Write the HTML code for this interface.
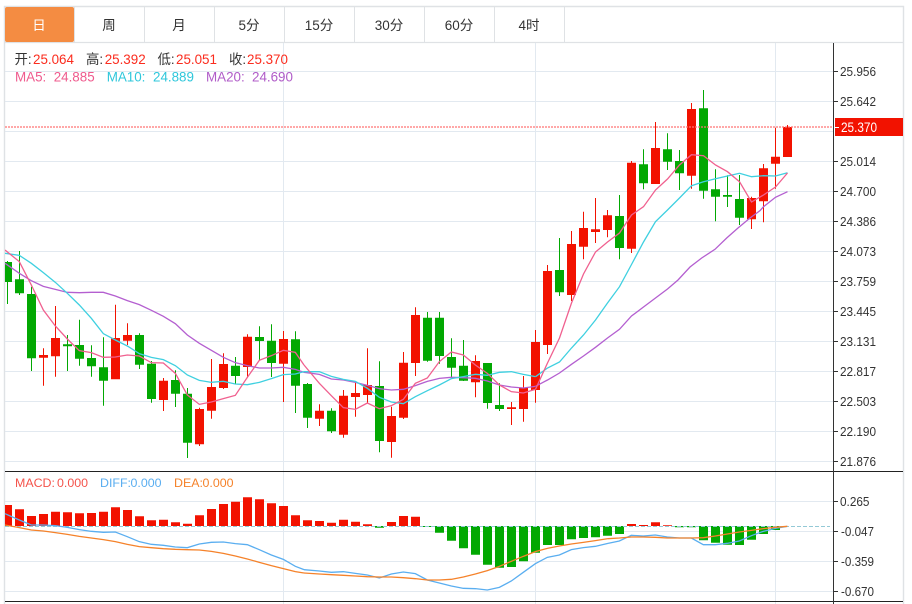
<!DOCTYPE html>
<html>
<head>
<meta charset="utf-8">
<style>
html,body{margin:0;padding:0;background:#fff;width:912px;height:604px;overflow:hidden}
svg{display:block;position:absolute;left:0;top:0}
text{font-family:"Liberation Sans","Noto Sans CJK SC",sans-serif}
.z polyline{fill:none;vector-effect:non-scaling-stroke}
.ax text{font-size:13px;fill:#333}
</style>
</head>
<body>
<svg width="912" height="604" viewBox="0 0 912 604">
<defs><clipPath id="c"><rect x="5" y="43" width="828" height="561"/></clipPath></defs>
<!-- frame -->
<path d="M4.5 604V6.5H903.5V604" fill="none" stroke="#dfe2e5" stroke-width="1.4"/>
<path d="M5 42.5H903" stroke="#dfe2e5" stroke-width="1.2"/>
<path d="M74.5 7V42M144.5 7V42M214.5 7V42M284.5 7V42M354.5 7V42M424.5 7V42M494.5 7V42M564.5 7V42" stroke="#dfe2e5"/>
<rect x="5" y="7" width="69" height="35" rx="2" fill="#f48c42"/>
<g font-size="13.5" text-anchor="middle" fill="#333">
<text x="39" y="30" fill="#fff">日</text>
<text x="109" y="30">周</text>
<text x="179" y="30">月</text>
<text x="249" y="30">5分</text>
<text x="319" y="30">15分</text>
<text x="389" y="30">30分</text>
<text x="459" y="30">60分</text>
<text x="529" y="30">4时</text>
</g>
<!-- grid -->
<path d="M5 71.5H833M5 101.5H833M5 131.5H833M5 161.5H833M5 191.5H833M5 221.5H833M5 251.5H833M5 281.5H833M5 311.5H833M5 341.5H833M5 371.5H833M5 401.5H833M5 431.5H833M5 461.5H833M5 501.5H833M5 531.5H833M5 561.5H833M5 591.5H833" stroke="#e2e9f0" fill="none"/>
<path d="M283.5 43V604M535.5 43V604M775.5 43V604" stroke="#e2e9f0" fill="none"/>
<g clip-path="url(#c)">
<!-- wicks -->
<path fill="none" stroke="#02a802" d="M7.5 261V304M19.5 251V295M31.5 286.7V371M67.5 335V371M79.5 319.7V365.7M91.5 345.3V376.7M103.5 337.3V405.7M139.5 333.3V369M151.5 361V402.7M175.5 370.3V407M187.5 388V458M235.5 357V384M259.5 326.3V360.7M271.5 324.3V377M295.5 331.3V413M307.5 383V428M331.5 408.3V433M379.5 361.3V452.3M427.5 312V361.7M439.5 312V363.7M451.5 338.3V378.3M463.5 340V381M487.5 363V408.7M499.5 383.3V411M559.5 238V296M619.5 195V259.3M643.5 149.3V189.3M667.5 133.3V170M679.5 150V190M703.5 90V198.7M715.5 169.3V221.3M727.5 175.3V207M739.5 175V225"/>
<path fill="none" stroke="#f21200" d="M43.5 348.3V385.7M55.5 306V376.7M115.5 304.7V379M127.5 323.3V345M163.5 378V411M199.5 407.7V446M211.5 359V418.7M223.5 353.3V389M247.5 334.3V377.7M283.5 331V402M319.5 404.3V426M343.5 390V437.7M355.5 382.7V416.7M367.5 348.3V402.7M391.5 406.7V457.7M403.5 352V419M415.5 307.3V376M475.5 355.3V397.3M511.5 402V425M523.5 376V421.7M535.5 330V402.7M547.5 265V354M571.5 231V301M583.5 211.7V259.3M595.5 198V243M607.5 210V237.3M631.5 161V253M655.5 122V184M691.5 103V188.7M751.5 196.7V229M763.5 164V222.3M775.5 127.7V188.7M787.5 125V157"/>
<!-- green bodies -->
<path fill="#02a802" d="M3 262H12V282H3ZM15 279.3H24V293.3H15ZM27 294H36V358.3H27ZM63 344.3H72V346.3H63ZM75 345H84V358.7H75ZM87 358H96V366.3H87ZM99 367.3H108V380.7H99ZM135 335H144V364.7H135ZM147 363.7H156V399H147ZM171 380H180V393.7H171ZM183 393.7H192V442.7H183ZM231 365.7H240V376H231ZM255 337H264V341H255ZM267 340.7H276V363H267ZM291 339.3H300V385.7H291ZM303 384H312V417.7H303ZM327 410.7H336V431.3H327ZM375 386H384V441H375ZM423 317.7H432V360.7H423ZM435 317.7H444V356H435ZM447 357H456V367.7H447ZM459 365.7H468V380.7H459ZM483 363H492V403H483ZM495 405H504V409H495ZM555 270H564V292.3H555ZM615 216H624V248H615ZM639 164.3H648V183.3H639ZM663 149.3H672V161.7H663ZM675 161H684V173.3H675ZM699 108.3H708V190.7H699ZM711 189.3H720V196.7H711ZM723 195H732V196.7H723ZM735 199H744V217.7H735Z"/>
<!-- red bodies -->
<path fill="#f21200" d="M39 355H48V357.7H39ZM51 338H60V356.3H51ZM111 338H120V379.3H111ZM123 335H132V340.7H123ZM159 380.7H168V400H159ZM195 409H204V444.3H195ZM207 387H216V410.7H207ZM219 364H228V388H219ZM243 336.7H252V367H243ZM279 339H288V363.7H279ZM315 410.7H324V418.7H315ZM339 395.7H348V434.7H339ZM351 393H360V397H351ZM363 385H372V395H363ZM387 416H396V442H387ZM399 362.7H408V417.7H399ZM411 315H420V363H411ZM471 361H480V382.3H471ZM507 407.3H516V409H507ZM519 387.7H528V409H519ZM531 342H540V390H531ZM543 271H552V345H543ZM567 244H576V295H567ZM579 228H588V246.7H579ZM591 229.3H600V232H591ZM603 215.3H612V230H603ZM627 162.7H636V248.7H627ZM651 148H660V184H651ZM687 109H696V175.7H687ZM747 198H756V219.3H747ZM759 168.3H768V201.3H759ZM771 156.7H780V163.7H771ZM783 127H792V157H783Z"/>
<!-- MA lines -->
<g class="z" transform="scale(.33333) translate(0,720)" stroke-width="1.3">
<polyline stroke="#b45fd0" points="15,70 58,100 94,122 130,139 166,148 202,157 238,158 274,157 310,157 346,168 382,182 418,194 454,211 490,229 526,251 562,285 598,310 634,331 670,352 706,368 742,377 778,384 814,384 850,382 886,388 912,397"/>
<polyline stroke="#3fd0e0" points="15,40 58,46 94,70 130,98 166,127 202,160 238,195 274,235 310,281 346,300 382,318 418,341 454,352 490,359 526,377 562,405 598,421 634,427 670,424 706,432 742,434 778,427 814,416 850,404 886,402 912,395"/>
<polyline stroke="#f0608f" points="15,30 58,65 94,135 130,210 166,258 202,297 238,332 274,338 310,352 346,351 382,345 418,348 454,368 490,369 526,400 562,465 598,493 634,486 670,476 706,466 742,412 778,361 814,347 850,331 886,337 912,375"/>
</g>
<g class="z" transform="translate(304,240) scale(.33333)" stroke-width="1.3">
<polyline stroke="#b45fd0" points="0,397 46,403 82,417 118,420 154,427 190,436 226,446 262,450 298,448 334,437 370,424 406,415 442,412 478,413 514,415 550,423 586,435 622,441 658,444 694,439"/>
<polyline stroke="#3fd0e0" points="0,395 46,395 82,409 118,418 154,424 190,445 226,472 262,486 298,491 334,470 370,452 406,435 442,416 478,410 514,403 550,406 586,397 622,395 658,403 694,410"/>
<polyline stroke="#f0608f" points="0,375 46,430 82,467 118,503 154,508 190,489 226,506 262,497 298,478 334,430 370,414 406,365 442,336 478,345 514,375 550,400 586,435 622,455 658,459 694,448"/>
</g>
<g fill="none" stroke-width="1.3">
<polyline stroke="#b45fd0" points="535.5,386.3 547.5,380 559.5,373 571.5,364.3 583.5,356 595.5,347.3 607.5,338 619.5,329.3 631.5,316 643.5,307 655.5,298 667.5,289 678,280 690,267 701.7,258 715,249.3 726.7,238 738,228 750,218 760,210.7 763.5,206.7 775.5,197.3 787.5,191.7"/>
<polyline stroke="#3fd0e0" points="535.5,376.7 547.5,368 559.5,362 571.5,348 583.5,335 595.5,320 607.5,303 619.5,286.7 631.5,264.5 643.5,242 655.5,221.7 667.5,210 679.5,198 691.5,185.7 703.5,181.7 715.5,178.7 727.5,176 739.5,173.3 751.5,176.7 763.5,175.7 775.5,176 787.5,172.7"/>
<polyline stroke="#f0608f" points="535.5,389.3 547.5,363 559.5,338 571.5,303 583.5,274 595.5,252 607.5,242 619.5,233 631.5,215 643.5,206.7 655.5,190 667.5,179 679.5,165 691.5,154.7 703.5,155.7 715.5,165 727.5,171.7 739.5,181.7 751.5,202 763.5,195 775.5,187 787.5,173"/>
</g>
<!-- MACD bars -->
<path fill="#f21200" d="M3 505H12V526H3ZM15 509.3H24V526H15ZM27 516H36V526H27ZM39 514H48V526H39ZM51 511.7H60V526H51ZM63 512.3H72V526H63ZM75 513.3H84V526H75ZM87 513H96V526H87ZM99 511.7H108V526H99ZM111 507.3H120V526H111ZM123 510H132V526H123ZM135 516.3H144V526H135ZM147 520.3H156V526H147ZM159 519.7H168V526H159ZM171 522.3H180V526H171ZM183 523.7H192V526H183ZM195 515.3H204V526H195ZM207 509H216V526H207ZM219 504H228V526H219ZM231 501.7H240V526H231ZM243 497.3H252V526H243ZM255 499.3H264V526H255ZM267 503.3H276V526H267ZM279 506H288V526H279ZM291 515.3H300V526H291ZM303 520.3H312V526H303ZM315 521H324V526H315ZM327 522.7H336V526H327ZM339 519.7H348V526H339ZM351 521.7H360V526H351ZM363 524.3H372V526H363ZM387 522H396V526H387ZM399 516H408V526H399ZM411 516.7H420V526H411ZM627 524H636V526H627ZM639 525H648V526H639ZM651 522.3H660V526H651ZM663 525.3H672V526H663Z"/>
<path fill="#02a802" d="M375 526H384V527.7H375ZM423 526H432V527H423ZM435 526H444V532.7H435ZM447 526H456V540.7H447ZM459 526H468V548.3H459ZM471 526H480V554.7H471ZM483 526H492V564.7H483ZM495 526H504V567.7H495ZM507 526H516V567H507ZM519 526H528V561.3H519ZM531 526H540V552.7H531ZM543 526H552V545H543ZM555 526H564V545H555ZM567 526H576V539.3H567ZM579 526H588V538H579ZM591 526H600V537.3H591ZM603 526H612V535.7H603ZM615 526H624V534H615ZM675 526H684V527.3H675ZM687 526H696V527.3H687ZM699 526H708V540.3H699ZM711 526H720V542.7H711ZM723 526H732V544.7H723ZM735 526H744V545H735ZM747 526H756V539.7H747ZM759 526H768V534H759ZM771 526H780V530H771Z"/>
<path d="M5 526.5H830" stroke="#93c9d6" stroke-dasharray="4 2" fill="none"/>
<!-- DIFF / DEA -->
<g class="z" transform="translate(0,465) scale(.33333)" stroke-width="1.3">
<polyline stroke="#5aaef0" points="15,146 58,165 94,180 130,180 166,182 202,187 238,194 274,199 310,202 346,201 382,215 418,230 454,238 490,241 526,246 562,248 598,237 634,232 670,231 706,236 742,239 778,254 814,270 850,283 886,304 912,314"/>
<polyline stroke="#f5822a" points="15,180 58,188 94,195 130,198 166,203 202,208 238,214 274,219 310,224 346,230 382,238 418,245 454,248 490,251 526,253 562,254 598,255 634,259 670,265 706,273 742,282 778,292 814,302 850,311 886,320 912,324"/>
</g>
<g class="z" transform="translate(304,465) scale(.33333)" stroke-width="1.3">
<polyline stroke="#5aaef0" points="0,314 46,318 82,322 118,320 154,325 190,330 226,339 262,327 298,321 334,326 370,345 406,354 442,363 478,370 514,371 550,375 586,367 622,348 658,322 694,296 730,277 766,270 802,254 838,248 874,244 912,235"/>
<polyline stroke="#f5822a" points="0,324 46,327 82,329 118,331 154,333 190,335 226,336 262,336 298,338 334,341 370,345 406,345 442,343 478,336 514,327 550,317 586,304 622,289 658,274 694,260 730,250 766,243 802,237 838,232 874,227 912,221"/>
</g>
<g class="z" transform="translate(608,465) scale(.33333)" stroke-width="1.3">
<polyline stroke="#5aaef0" points="0,235 34,228 70,211 106,213 142,210 178,216 214,219 250,219 286,239 322,239 358,235 394,228 430,212 466,199 502,190 538,184"/>
<polyline stroke="#f5822a" points="0,221 34,219 70,216 106,216 142,217 178,219 214,219 250,219 286,218 322,213 358,207 394,201 430,196 466,191 502,187 538,184"/>
</g>
<!-- price line -->
<path d="M5 127H833" stroke="#ff7575" stroke-width="1.2" stroke-dasharray="2 1" fill="none"/>
</g>
<!-- MACD frame lines -->
<path d="M5 471.5H903M5 601.5H903" stroke="#222" fill="none"/>
<!-- axis -->
<path d="M833.5 43V604" stroke="#333" fill="none"/>
<path d="M834 71.5H838M834 101.5H838M834 161.5H838M834 191.5H838M834 221.5H838M834 251.5H838M834 281.5H838M834 311.5H838M834 341.5H838M834 371.5H838M834 401.5H838M834 431.5H838M834 461.5H838M834 501.5H838M834 531.5H838M834 561.5H838M834 591.5H838" stroke="#333" fill="none"/>
<g class="ax">
<text x="840" y="76" textLength="36" lengthAdjust="spacingAndGlyphs">25.956</text>
<text x="840" y="106" textLength="36" lengthAdjust="spacingAndGlyphs">25.642</text>
<text x="840" y="166" textLength="36" lengthAdjust="spacingAndGlyphs">25.014</text>
<text x="840" y="196" textLength="36" lengthAdjust="spacingAndGlyphs">24.700</text>
<text x="840" y="226" textLength="36" lengthAdjust="spacingAndGlyphs">24.386</text>
<text x="840" y="256" textLength="36" lengthAdjust="spacingAndGlyphs">24.073</text>
<text x="840" y="286" textLength="36" lengthAdjust="spacingAndGlyphs">23.759</text>
<text x="840" y="316" textLength="36" lengthAdjust="spacingAndGlyphs">23.445</text>
<text x="840" y="346" textLength="36" lengthAdjust="spacingAndGlyphs">23.131</text>
<text x="840" y="376" textLength="36" lengthAdjust="spacingAndGlyphs">22.817</text>
<text x="840" y="406" textLength="36" lengthAdjust="spacingAndGlyphs">22.503</text>
<text x="840" y="436" textLength="36" lengthAdjust="spacingAndGlyphs">22.190</text>
<text x="840" y="466" textLength="36" lengthAdjust="spacingAndGlyphs">21.876</text>
<text x="840" y="506" textLength="29.5" lengthAdjust="spacingAndGlyphs">0.265</text>
<text x="841" y="536" textLength="33" lengthAdjust="spacingAndGlyphs">-0.047</text>
<text x="841" y="566" textLength="33" lengthAdjust="spacingAndGlyphs">-0.359</text>
<text x="841" y="596" textLength="33" lengthAdjust="spacingAndGlyphs">-0.670</text>
</g>
<rect x="835" y="118" width="68" height="18" fill="#f21200"/>
<path d="M835 127.5H839" stroke="#fff" fill="none"/>
<text x="841" y="132" font-size="13.4" fill="#fff" textLength="36" lengthAdjust="spacingAndGlyphs">25.370</text>
<!-- header info -->
<g font-size="13.4">
<text x="14.5" y="64" fill="#333">开:</text><text x="33" y="64" fill="#fb2c1e">25.064</text>
<text x="86" y="64" fill="#333">高:</text><text x="104.7" y="64" fill="#fb2c1e">25.392</text>
<text x="157.5" y="64" fill="#333">低:</text><text x="176" y="64" fill="#fb2c1e">25.051</text>
<text x="229" y="64" fill="#333">收:</text><text x="247" y="64" fill="#fb2c1e">25.370</text>
<text x="15" y="81.5" fill="#ef5b8e">MA5:</text><text x="53.7" y="81.5" fill="#ef5b8e">24.885</text>
<text x="106.7" y="81.5" fill="#2fc7db">MA10:</text><text x="153" y="81.5" fill="#2fc7db">24.889</text>
<text x="206" y="81.5" fill="#b05cc8">MA20:</text><text x="252" y="81.5" fill="#b05cc8">24.690</text>
</g>
<g font-size="12.4">
<text x="15" y="487" fill="#f4534b">MACD:</text><text x="57" y="487" fill="#f4534b">0.000</text>
<text x="100" y="487" fill="#5aaef0">DIFF:</text><text x="130.5" y="487" fill="#5aaef0">0.000</text>
<text x="174" y="487" fill="#f5822a">DEA:</text><text x="202.5" y="487" fill="#f5822a">0.000</text>
</g>
</svg>
</body>
</html>
